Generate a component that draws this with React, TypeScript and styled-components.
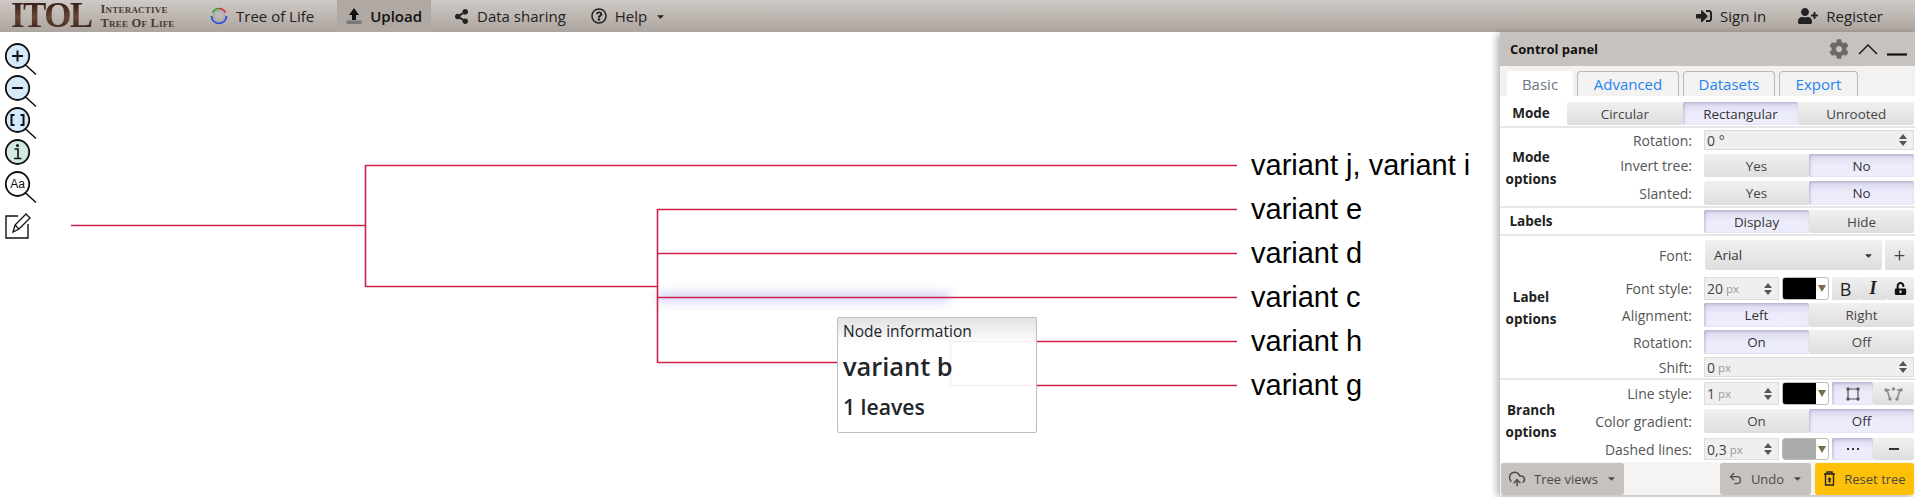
import React from "react";
import styled, { createGlobalStyle, css } from "styled-components";
import {
  FaSignInAlt,
  FaUserPlus,
  FaShareAlt,
  FaRegQuestionCircle,
  FaCog,
  FaCaretDown,
  FaUnlockAlt,
} from "react-icons/fa";
import { LuCloudUpload, LuUndo2, LuPlus } from "react-icons/lu";

const UI_FONT = `"Open Sans", "Noto Sans", sans-serif`;

const GlobalStyle = createGlobalStyle`
  html, body { margin: 0; padding: 0; background: #fff; overflow: hidden; }
  body { font-family: ${UI_FONT}; color: #333; }
  * { box-sizing: border-box; }
`;

const Page = styled.div`
  width: 1915px;
  height: 497px;
  display: flex;
  flex-direction: column;
  overflow: hidden;
`;

const NavBar = styled.nav`
  height: 32px;
  flex: none;
  display: flex;
  align-items: stretch;
  gap: 14px;
  padding-right: 23px;
  background: linear-gradient(#cfcac6, #aca49e);
`;

const Logo = styled.div`
  width: 187px;
  padding-left: 11px;
  display: flex;
  align-items: center;
  gap: 9px;
`;

const LogoMark = styled.div`
  font-family: "Liberation Serif", serif;
  font-weight: 700;
  font-size: 35px;
  line-height: 32px;
  height: 32px;
  letter-spacing: -1.6px;
  background: linear-gradient(#2c1a12, #6a4636 55%, #2c1a12);
  -webkit-background-clip: text;
  background-clip: text;
  color: transparent;
`;

const LogoText = styled.span`
  font-family: "Liberation Serif", serif;
  font-size: 12.5px;
  line-height: 14px;
  font-variant: small-caps;
  font-weight: 700;
  color: #4a3a32;
  letter-spacing: 0.2px;
  white-space: nowrap;
`;

const NavItem = styled.div<{ $active?: boolean; $tight?: boolean }>`
  display: flex;
  align-items: center;
  gap: 8px;
  padding: 0 9px;
  margin-left: ${(p) => (p.$tight ? "-7px" : "0")};
  font-size: 15px;
  color: #222;
  white-space: nowrap;
  ${(p) =>
    p.$active &&
    css`
      background: #b0a8a3;
      font-weight: 600;
      color: #111;
    `}
`;

const NavSpacer = styled.div`
  flex: 1;
`;

const Canvas = styled.main`
  flex: 1;
  position: relative;
`;

const TreeSvg = styled.svg`
  display: block;
  position: absolute;
  left: 0;
  top: -32px;
`;

const LeafLabel = styled.text`
  font-family: "Liberation Sans", Arial, sans-serif;
  font-size: 29px;
  fill: #000;
`;

const ToolBar = styled.div`
  position: absolute;
  left: 0;
  top: 8px;
  display: flex;
  flex-direction: column;
`;

const ToolIcon = styled.svg<{ $top?: number }>`
  display: block;
  width: 38px;
  height: 32px;
  overflow: visible;
  margin-top: ${(p) => p.$top ?? 0}px;
`;

const NodeInfo = styled.div`
  position: absolute;
  left: 837px;
  top: 285px;
  width: 200px;
  height: 116px;
  border: 1px solid #bdbdbd;
  border-radius: 2px;
  background: rgba(255, 255, 255, 0.93);
  color: #212529;
`;

const NodeTitle = styled.div`
  height: 26px;
  padding: 2px 5px 0;
  font-size: 15.5px;
  background: linear-gradient(#e2e2e2, rgba(255, 255, 255, 0));
`;

const NodeName = styled.div`
  padding: 5px 5px 0;
  font-size: 25.4px;
  font-weight: 600;
  line-height: 34px;
`;

const NodeLeaves = styled.div`
  padding: 9px 5px 0;
  font-size: 21.2px;
  font-weight: 600;
  line-height: 30px;
`;

const Panel = styled.aside`
  position: absolute;
  right: 0;
  top: 0;
  width: 415px;
  height: 463px;
  background: #fff;
  box-shadow: -3px 2px 7px rgba(0, 0, 0, 0.3);
  display: flex;
  flex-direction: column;
`;

const PanelHeader = styled.header`
  height: 34px;
  flex: none;
  background: #c8c2be;
  display: flex;
  align-items: center;
  padding: 0 8px 0 10px;
`;

const PanelTitle = styled.div`
  flex: 1;
  font-weight: 700;
  font-size: 13px;
  color: #111;
`;

const HeaderTools = styled.div`
  display: flex;
  align-items: center;
  gap: 9px;
  color: #6a6a6a;
`;

const TabStrip = styled.div`
  height: 30px;
  flex: none;
  display: flex;
  align-items: flex-end;
  gap: 4px;
  padding-left: 7px;
  background: #f3f2f1;
`;

const Tab = styled.div<{ $active?: boolean; $w: number }>`
  width: ${(p) => p.$w}px;
  height: 25px;
  display: flex;
  align-items: center;
  justify-content: center;
  font-size: 15px;
  border: 1px solid #bdb8b4;
  border-bottom: 0;
  border-radius: 4px 4px 0 0;
  color: #1e84f0;
  ${(p) =>
    p.$active &&
    css`
      background: #fff;
      border-color: #fff;
      color: #6c757d;
    `}
`;

const Section = styled.section<{ $h: number; $pt: number; $plain?: boolean }>`
  height: ${(p) => p.$h}px;
  flex: none;
  display: flex;
  align-items: flex-start;
  padding-top: ${(p) => p.$pt}px;
  border-bottom: ${(p) => (p.$plain ? "0" : "2px solid #e6e6e6")};
`;

const SectionLabel = styled.div<{ $top?: number }>`
  width: 67px;
  flex: none;
  padding-right: 5px;
  margin-top: ${(p) => p.$top ?? 0}px;
  text-align: center;
  font-weight: 700;
  font-size: 13.5px;
  line-height: 22px;
  color: #222;
`;

const Fields = styled.div<{ $gap: number }>`
  flex: 1;
  display: flex;
  flex-direction: column;
  gap: ${(p) => p.$gap}px;
`;

const FieldRow = styled.div<{ $h: number; $mb?: number }>`
  height: ${(p) => p.$h}px;
  margin-bottom: ${(p) => p.$mb ?? 0}px;
  display: flex;
  align-items: center;
`;

const FieldLabel = styled.div`
  width: 137px;
  flex: none;
  text-align: right;
  padding-right: 12px;
  font-size: 14px;
  color: #555;
  white-space: nowrap;
`;

const Control = styled.div`
  flex: 1;
  display: flex;
  align-items: stretch;
  height: 100%;
  margin-right: 1px;
  gap: 3px;
`;

const Group = styled.div<{ $flat?: number }>`
  display: flex;
  flex: 1;
  height: ${(p) => (p.$flat ? `${p.$flat}px` : "auto")};
  margin-right: ${(p) => (p.$flat ? "1px" : "0")};
`;

const Toggle = styled.div<{ $active?: boolean; $narrow?: boolean }>`
  flex: ${(p) => (p.$narrow ? "none" : 1)};
  width: ${(p) => (p.$narrow ? "29px" : "auto")};
  display: flex;
  align-items: center;
  justify-content: center;
  font-size: 13.4px;
  color: #444;
  background: linear-gradient(#f0f0f0, #dedede);
  border-radius: 2px;
  ${(p) =>
    p.$active &&
    css`
      background: linear-gradient(#d8d6ea, #ecebfb 45%, #eeedfc);
      box-shadow: inset 1px 1px 3px rgba(90, 85, 150, 0.35);
      color: #333;
    `}
`;

const NumberBox = styled.div<{ $w?: number }>`
  flex: ${(p) => (p.$w ? "none" : 1)};
  width: ${(p) => (p.$w ? `${p.$w}px` : "auto")};
  display: flex;
  align-items: center;
  padding: 0 6px 0 2px;
  background: #efefef;
  border: 1px solid #dcdcdc;
  font-size: 14px;
  color: #444;
`;

const Unit = styled.span`
  margin-left: 3px;
  font-size: 11.5px;
  color: #999;
  flex: 1;
`;

const Spinner = styled.svg`
  width: 8px;
  height: 12px;
  flex: none;
`;

const Swatch = styled.div<{ $color: string }>`
  width: 47px;
  flex: none;
  display: flex;
  border: 1px solid #bbb;
  border-radius: 3px;
  overflow: hidden;
  background: #fff;
  &::before {
    content: "";
    width: 33px;
    background: ${(p) => p.$color};
  }
`;

const SwatchArrow = styled.div`
  flex: 1;
  display: flex;
  align-items: center;
  justify-content: center;
  &::before {
    content: "";
    border-left: 4px solid transparent;
    border-right: 4px solid transparent;
    border-top: 7px solid #7a6a50;
  }
`;

const SelectBox = styled.div`
  flex: 1;
  margin-left: 1px;
  display: flex;
  align-items: center;
  justify-content: space-between;
  padding: 0 8px 0 9px;
  background: linear-gradient(#f0f0f0, #dedede);
  border-radius: 2px;
  font-size: 13.4px;
  color: #333;
`;

const Footer = styled.footer`
  flex: 1;
  display: flex;
  align-items: center;
  gap: 4px;
  padding: 0 1px;
  background: #f5f4f3;
`;

const FooterButton = styled.div<{ $w: number; $primary?: boolean }>`
  width: ${(p) => p.$w}px;
  height: 32px;
  display: flex;
  align-items: center;
  justify-content: center;
  gap: 8px;
  border-radius: 3px;
  font-size: 13px;
  background: ${(p) => (p.$primary ? "#ffc107" : "#c8c2be")};
  color: #4a4a4a;
`;

const FooterGap = styled.div`
  flex: 1;
`;

const Glyph = styled.span<{ $italic?: boolean }>`
  font-family: ${(p) => (p.$italic ? `"Liberation Serif", serif` : UI_FONT)};
  font-style: ${(p) => (p.$italic ? "italic" : "normal")};
  font-weight: ${(p) => (p.$italic ? 700 : 400)};
  font-size: 18px;
  color: #222;
`;

const RED = "#cc2148";

const branches = [
  "M71 225.5H365.5",
  "M365.5 165V287",
  "M365.5 165.5H1237",
  "M365.5 286.5H657.5",
  "M657.5 209V363",
  "M657.5 209.5H1237",
  "M657.5 253.5H1237",
  "M657.5 297.5H1237",
  "M657.5 362.5H950.5",
  "M950.5 341V386",
  "M950.5 341.5H1237",
  "M950.5 385.5H1237",
];

const leaves = [
  { name: "variant j, variant i", y: 175 },
  { name: "variant e", y: 219 },
  { name: "variant d", y: 263 },
  { name: "variant c", y: 307 },
  { name: "variant h", y: 351 },
  { name: "variant g", y: 395 },
];

const Lens = ({ fill, handle = true, children }: { fill: string; handle?: boolean; children?: React.ReactNode }) => (
  <ToolIcon viewBox="0 0 38 32">
    {handle && <path d="M25 24.5L36 34.5" stroke="#111" strokeWidth="1.6" />}
    <ellipse cx="17.5" cy="16" rx="11.7" ry="12" fill={fill} stroke="#111" strokeWidth="1.8" />
    {children}
  </ToolIcon>
);

const Spin = () => (
  <Spinner viewBox="0 0 8 12">
    <path d="M4 0L8 5H0ZM4 12L0 7H8Z" fill="#555" />
  </Spinner>
);

const Num = ({ value, unit, w }: { value: string; unit?: string; w?: number }) => (
  <NumberBox $w={w}>
    {value}
    <Unit>{unit}</Unit>
    <Spin />
  </NumberBox>
);

const Color = ({ color }: { color: string }) => (
  <Swatch $color={color}>
    <SwatchArrow />
  </Swatch>
);

const Pair = ({ a, b, on }: { a: string; b: string; on: 0 | 1 }) => (
  <Group>
    <Toggle $active={on === 0}>{a}</Toggle>
    <Toggle $active={on === 1}>{b}</Toggle>
  </Group>
);

const SquareBranch = () => (
  <svg width="14" height="14" viewBox="0 0 14 14">
    <path d="M2 2H12V12H2Z" stroke="#555" strokeWidth="1.2" fill="none" />
    {[
      [2, 2],
      [12, 2],
      [2, 12],
      [12, 12],
    ].map(([x, y]) => (
      <circle key={`${x}-${y}`} cx={x} cy={y} r="1.7" fill="#555" />
    ))}
  </svg>
);

const CurvedBranch = () => (
  <svg width="19" height="14" viewBox="0 0 19 14">
    <path d="M2 3H6M13 3H17M3 3L6 12M16 3L13 12" stroke="#8a8a8a" strokeWidth="1.5" fill="none" />
    {[
      [2, 3],
      [17, 3],
      [6, 12],
      [13, 12],
      [9.5, 2],
    ].map(([x, y]) => (
      <circle key={`${x}-${y}`} cx={x} cy={y} r="1.7" fill="#8a8a8a" />
    ))}
  </svg>
);

export default function App() {
  return (
    <Page>
      <GlobalStyle />
      <NavBar>
        <Logo>
          <LogoMark>ITOL</LogoMark>
          <LogoText>
            Interactive
            <br />
            Tree Of Life
          </LogoText>
        </Logo>
        <NavItem>
          <svg width="18" height="18" viewBox="0 0 18 18">
            <circle cx="9" cy="9" r="5.5" fill="none" stroke="#aaa" strokeWidth="2" />
            <path d="M1.5 9a7.5 7.5 0 0 0 15 0" fill="none" stroke="#1a3fe0" strokeWidth="1.6" />
            <path d="M2.5 5.5A7.5 7.5 0 0 1 9 1.5" fill="none" stroke="#2ca02c" strokeWidth="1.6" />
            <path d="M9 1.5a7.5 7.5 0 0 1 6.5 4" fill="none" stroke="#d83030" strokeWidth="1.6" />
          </svg>
          Tree of Life
        </NavItem>
        <NavItem $active>
          <svg width="16" height="18" viewBox="0 0 16 18">
            <path d="M8 1L13 8H10V13H6V8H3Z" fill="#111" />
            <rect x="0.5" y="13.5" width="15" height="3.5" fill="#777" />
          </svg>
          Upload
        </NavItem>
        <NavItem>
          <FaShareAlt size={15} color="#222" />
          Data sharing
        </NavItem>
        <NavItem $tight>
          <FaRegQuestionCircle size={16} color="#222" />
          Help
          <FaCaretDown size={11} />
        </NavItem>
        <NavSpacer />
        <NavItem>
          <FaSignInAlt size={16} color="#222" />
          Sign in
        </NavItem>
        <NavItem>
          <FaUserPlus size={20} color="#222" />
          Register
        </NavItem>
      </NavBar>

      <Canvas>
        <TreeSvg width="1915" height="497" viewBox="0 0 1915 497">
          <defs>
            <filter id="glow" x="-10%" y="-400%" width="120%" height="900%">
              <feGaussianBlur stdDeviation="5" />
            </filter>
          </defs>
          <rect x="657" y="292" width="293" height="10" fill="#c9c6f5" opacity="0.75" filter="url(#glow)" />
          {branches.map((d) => (
            <path key={d} d={d} stroke={RED} strokeWidth="1.6" fill="none" />
          ))}
          {leaves.map((l) => (
            <LeafLabel key={l.name} x="1251" y={l.y}>
              {l.name}
            </LeafLabel>
          ))}
        </TreeSvg>

        <ToolBar>
          <Lens fill="#d4e9f9">
            <path d="M12 16H23M17.5 10.5V21.5" stroke="#111" strokeWidth="2" />
          </Lens>
          <Lens fill="#d4e9f9">
            <path d="M12 16H23" stroke="#111" strokeWidth="2" />
          </Lens>
          <Lens fill="#d4e9f9">
            <path d="M14.5 11H11.5V21H14.5M20.5 11H23.5V21H20.5" fill="none" stroke="#111" strokeWidth="2" />
          </Lens>
          <Lens fill="#d2eae2" handle={false}>
            <circle cx="17.5" cy="9.5" r="1.5" fill="#111" />
            <path d="M14.5 13H18V22M14 22.5H21.5" fill="none" stroke="#111" strokeWidth="1.6" />
          </Lens>
          <Lens fill="#fff">
            <text x="17.5" y="20" textAnchor="middle" fontFamily="Liberation Sans, sans-serif" fontSize="12" fill="#111">
              Aa
            </text>
          </Lens>
          <ToolIcon viewBox="0 0 38 32" $top={7}>
            <path d="M18 9H6V31H28V17" fill="none" stroke="#111" strokeWidth="1.4" />
            <path d="M13 25L15 18L26 7L30 11L19 22Z M15 18L19 22" fill="#fff" stroke="#111" strokeWidth="1.3" />
          </ToolIcon>
        </ToolBar>

        <NodeInfo>
          <NodeTitle>Node information</NodeTitle>
          <NodeName>variant b</NodeName>
          <NodeLeaves>1 leaves</NodeLeaves>
        </NodeInfo>

        <Panel>
          <PanelHeader>
            <PanelTitle>Control panel</PanelTitle>
            <HeaderTools>
              <FaCog size={20} />
              <svg width="20" height="12" viewBox="0 0 20 12">
                <path d="M1 11L10 2L19 11" fill="none" stroke="#111" strokeWidth="1.4" />
              </svg>
              <svg width="20" height="14" viewBox="0 0 20 14">
                <path d="M0 12.5H20" stroke="#111" strokeWidth="2.2" />
              </svg>
            </HeaderTools>
          </PanelHeader>
          <TabStrip>
            <Tab $active $w={66}>Basic</Tab>
            <Tab $w={102}>Advanced</Tab>
            <Tab $w={92}>Datasets</Tab>
            <Tab $w={79}>Export</Tab>
          </TabStrip>

          <Section $h={32} $pt={6}>
            <SectionLabel>Mode</SectionLabel>
            <Group $flat={23}>
              <Toggle>Circular</Toggle>
              <Toggle $active>Rectangular</Toggle>
              <Toggle>Unrooted</Toggle>
            </Group>
          </Section>

          <Section $h={80} $pt={2}>
            <SectionLabel $top={16}>
              Mode
              <br />
              options
            </SectionLabel>
            <Fields $gap={4}>
              <FieldRow $h={20}>
                <FieldLabel>Rotation:</FieldLabel>
                <Control>
                  <Num value="0 °" />
                </Control>
              </FieldRow>
              <FieldRow $h={23}>
                <FieldLabel>Invert tree:</FieldLabel>
                <Control>
                  <Pair a="Yes" b="No" on={1} />
                </Control>
              </FieldRow>
              <FieldRow $h={24}>
                <FieldLabel>Slanted:</FieldLabel>
                <Control>
                  <Pair a="Yes" b="No" on={1} />
                </Control>
              </FieldRow>
            </Fields>
          </Section>

          <Section $h={28} $pt={2}>
            <SectionLabel>Labels</SectionLabel>
            <Fields $gap={0}>
              <FieldRow $h={23}>
                <FieldLabel />
                <Control>
                  <Pair a="Display" b="Hide" on={0} />
                </Control>
              </FieldRow>
            </Fields>
          </Section>

          <Section $h={144} $pt={4}>
            <SectionLabel $top={46}>
              Label
              <br />
              options
            </SectionLabel>
            <Fields $gap={3}>
              <FieldRow $h={30} $mb={4}>
                <FieldLabel>Font:</FieldLabel>
                <Control>
                  <SelectBox>
                    Arial
                    <FaCaretDown size={11} />
                  </SelectBox>
                  <Toggle $narrow>
                    <LuPlus size={15} />
                  </Toggle>
                </Control>
              </FieldRow>
              <FieldRow $h={23}>
                <FieldLabel>Font style:</FieldLabel>
                <Control>
                  <Num value="20" unit="px" w={75} />
                  <Color color="#000" />
                  <Group>
                    <Toggle>
                      <Glyph>B</Glyph>
                    </Toggle>
                    <Toggle>
                      <Glyph $italic>I</Glyph>
                    </Toggle>
                    <Toggle>
                      <FaUnlockAlt size={13} color="#111" />
                    </Toggle>
                  </Group>
                </Control>
              </FieldRow>
              <FieldRow $h={24}>
                <FieldLabel>Alignment:</FieldLabel>
                <Control>
                  <Pair a="Left" b="Right" on={0} />
                </Control>
              </FieldRow>
              <FieldRow $h={24}>
                <FieldLabel>Rotation:</FieldLabel>
                <Control>
                  <Pair a="On" b="Off" on={0} />
                </Control>
              </FieldRow>
              <FieldRow $h={20}>
                <FieldLabel>Shift:</FieldLabel>
                <Control>
                  <Num value="0" unit="px" />
                </Control>
              </FieldRow>
            </Fields>
          </Section>

          <Section $h={82} $pt={2} $plain>
            <SectionLabel $top={17}>
              Branch
              <br />
              options
            </SectionLabel>
            <Fields $gap={4}>
              <FieldRow $h={23}>
                <FieldLabel>Line style:</FieldLabel>
                <Control>
                  <Num value="1" unit="px" w={75} />
                  <Color color="#000" />
                  <Group>
                    <Toggle $active>
                      <SquareBranch />
                    </Toggle>
                    <Toggle>
                      <CurvedBranch />
                    </Toggle>
                  </Group>
                </Control>
              </FieldRow>
              <FieldRow $h={24} $mb={1}>
                <FieldLabel>Color gradient:</FieldLabel>
                <Control>
                  <Pair a="On" b="Off" on={1} />
                </Control>
              </FieldRow>
              <FieldRow $h={22}>
                <FieldLabel>Dashed lines:</FieldLabel>
                <Control>
                  <Num value="0,3" unit="px" w={75} />
                  <Color color="#aaa" />
                  <Group>
                    <Toggle $active>
                      <svg width="14" height="4" viewBox="0 0 14 4">
                        <path d="M1 2H3M6 2H8M11 2H13" stroke="#333" strokeWidth="2" />
                      </svg>
                    </Toggle>
                    <Toggle>
                      <svg width="14" height="4" viewBox="0 0 14 4">
                        <path d="M2 2H12" stroke="#333" strokeWidth="2" />
                      </svg>
                    </Toggle>
                  </Group>
                </Control>
              </FieldRow>
            </Fields>
          </Section>

          <Footer>
            <FooterButton $w={123}>
              <LuCloudUpload size={18} />
              Tree views
              <FaCaretDown size={11} />
            </FooterButton>
            <FooterGap />
            <FooterButton $w={91}>
              <LuUndo2 size={15} />
              Undo
              <FaCaretDown size={11} />
            </FooterButton>
            <FooterButton $w={99} $primary>
              <svg width="13" height="15" viewBox="0 0 13 15">
                <path d="M1 3H12M4 3V1H9V3M2.5 3V14H10.5V3" fill="none" stroke="#222" strokeWidth="1.4" />
                <path d="M6.5 6L4.5 8.5H8.5ZM5.5 8.5V11.5H7.5V8.5" fill="#222" />
              </svg>
              Reset tree
            </FooterButton>
          </Footer>
        </Panel>
      </Canvas>
    </Page>
  );
}
